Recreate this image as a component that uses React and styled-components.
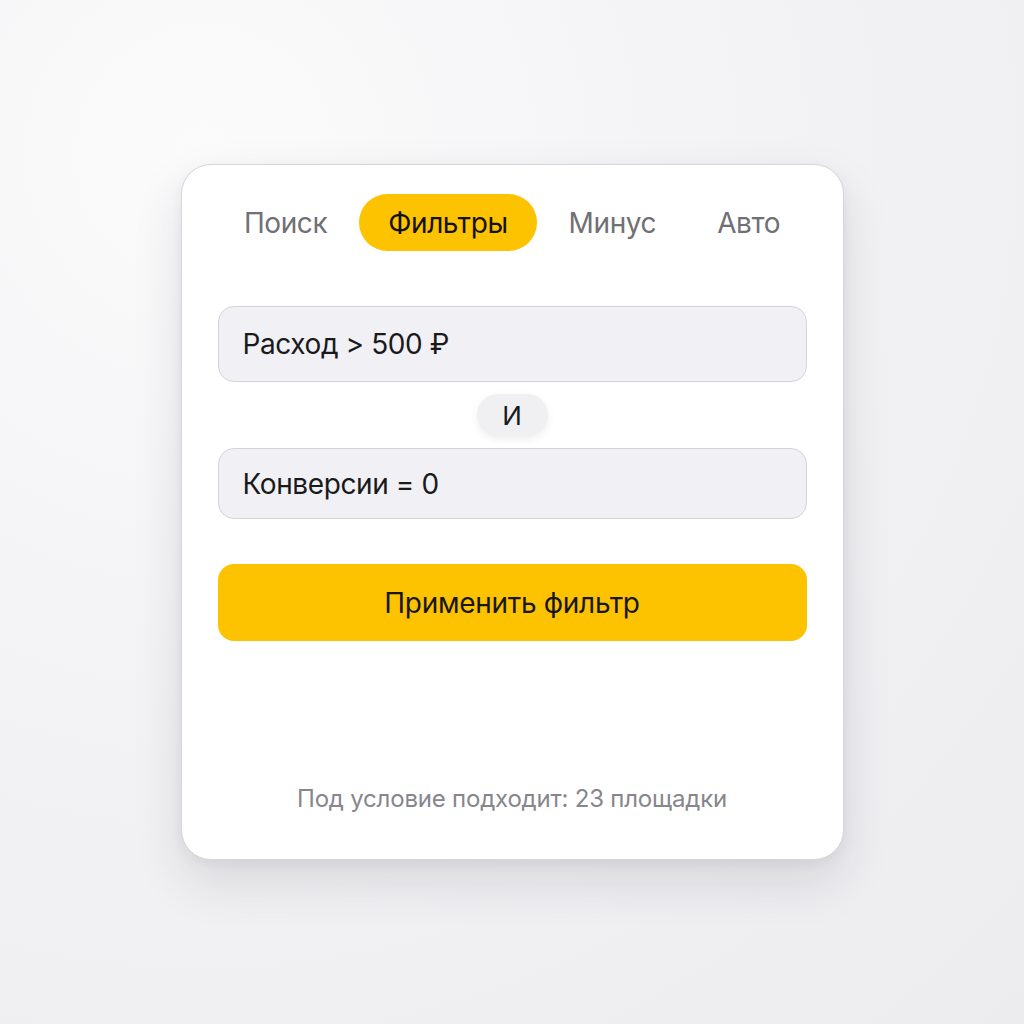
import React, { useState } from 'react';
import styled, { createGlobalStyle } from 'styled-components';

const GlobalStyle = createGlobalStyle`
  html, body {
    margin: 0;
    padding: 0;
  }
  body {
    font-family: Inter, Roboto, "Liberation Sans", Arial, sans-serif;
    background: radial-gradient(circle at 20% 15%, #fbfbfc 0%, #f3f3f5 45%, #ececef 100%);
  }
`;

const Page = styled.div`
  width: 1024px;
  height: 1024px;
  display: flex;
  align-items: center;
  justify-content: center;
`;

const Card = styled.div`
  box-sizing: border-box;
  width: 663px;
  height: 696px;
  background: #ffffff;
  border: 1px solid #d6d6db;
  border-radius: 30px;
  box-shadow: 0 22px 50px rgba(30, 30, 50, 0.12), 0 4px 12px rgba(30, 30, 50, 0.05);
  padding: 29px 36px 46px;
  display: flex;
  flex-direction: column;
`;

const Tabs = styled.div`
  display: flex;
  justify-content: center;
  gap: 3px;
`;

const Tab = styled.button`
  height: 57px;
  padding: 0 29px;
  border: none;
  border-radius: 29px;
  font-family: inherit;
  font-size: 28px;
  letter-spacing: -0.4px;
  cursor: pointer;
  background: ${p => (p.$active ? '#fdc300' : 'transparent')};
  color: ${p => (p.$active ? '#121212' : '#707075')};
`;

const Conditions = styled.div`
  margin-top: 55px;
  display: flex;
  flex-direction: column;
  align-items: center;
  gap: 12px;
`;

const Field = styled.div`
  box-sizing: border-box;
  width: 100%;
  height: ${p => p.$h}px;
  display: flex;
  align-items: center;
  padding: 0 24px;
  background: #f1f1f5;
  border: 1.5px solid #d3d3d9;
  border-radius: 16px;
  font-size: 28px;
  letter-spacing: -0.4px;
  color: #1a1a1c;
`;

const Joiner = styled.div`
  width: 71px;
  height: 42px;
  border-radius: 21px;
  background: #f0f0f3;
  box-shadow: 0 3px 8px rgba(0, 0, 0, 0.07);
  display: flex;
  align-items: center;
  justify-content: center;
  font-size: 26px;
  color: #1a1a1c;
`;

const Apply = styled.button`
  margin-top: 45px;
  width: 100%;
  height: 77px;
  border: none;
  border-radius: 16px;
  background: #fdc300;
  font-family: inherit;
  font-size: 28px;
  letter-spacing: -0.3px;
  color: #17171a;
  cursor: pointer;
`;

const Footer = styled.div`
  margin-top: auto;
  text-align: center;
  font-size: 24px;
  letter-spacing: -0.2px;
  color: #86868c;
`;

const tabs = ['Поиск', 'Фильтры', 'Минус', 'Авто'];

export default function App() {
  const [active, setActive] = useState('Фильтры');
  return (
    <>
      <GlobalStyle />
      <Page>
        <Card>
          <Tabs>
            {tabs.map(t => (
              <Tab key={t} $active={t === active} onClick={() => setActive(t)}>
                {t}
              </Tab>
            ))}
          </Tabs>
          <Conditions>
            <Field $h={76}>Расход &gt; 500 ₽</Field>
            <Joiner>И</Joiner>
            <Field $h={71}>Конверсии = 0</Field>
          </Conditions>
          <Apply>Применить фильтр</Apply>
          <Footer>Под условие подходит: 23 площадки</Footer>
        </Card>
      </Page>
    </>
  );
}
